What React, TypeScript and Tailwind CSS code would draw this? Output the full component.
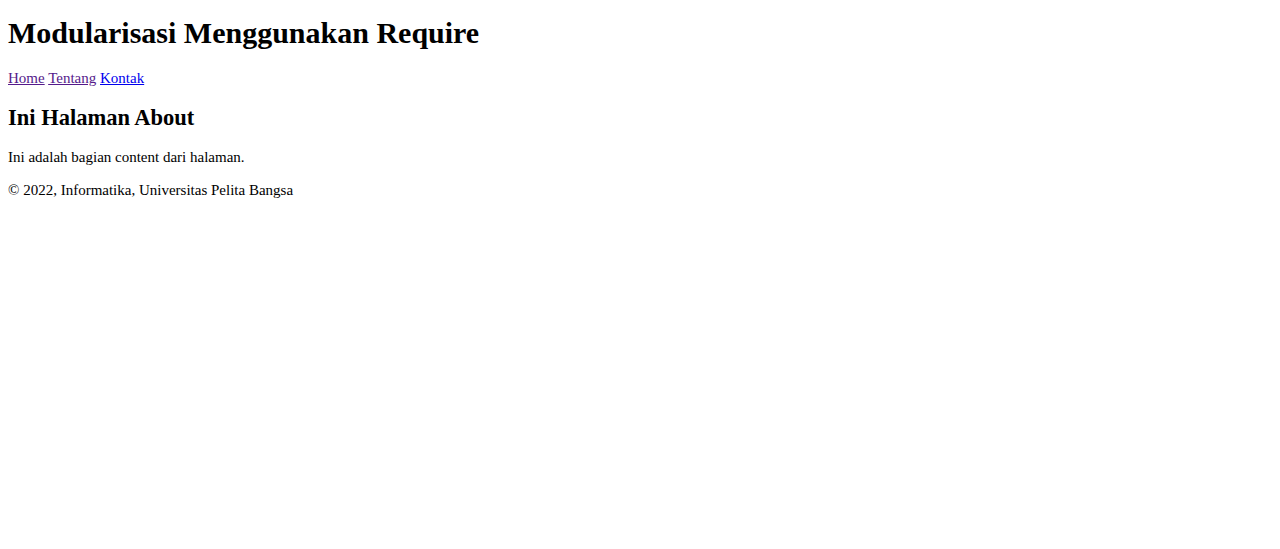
export default function App() {
  return (
    <div className="min-h-[549px] bg-white px-2 pt-[15px] text-black" style={{ fontFamily: '"Liberation Serif", "Times New Roman", serif' }}>
      <header>
        <h1 className="text-[30px] font-bold leading-[35px]">Modularisasi Menggunakan Require</h1>
        <nav className="mt-[20px] text-[15px] leading-[17px]">
          <a href="#home" className="text-[#551a8b] underline">Home</a>{" "}
          <a href="#tentang" className="text-[#551a8b] underline">Tentang</a>{" "}
          <a href="#kontak" className="text-[#0000ee] underline">Kontak</a>
        </nav>
      </header>
      <main>
        <h2 className="mt-[18px] text-[22.5px] font-bold leading-[26px]">Ini Halaman About</h2>
        <p className="mt-[18px] text-[15px] leading-[17px]">Ini adalah bagian content dari halaman.</p>
      </main>
      <footer className="mt-[16px] text-[15px] leading-[17px]">
        <p>© 2022, Informatika, Universitas Pelita Bangsa</p>
      </footer>
    </div>
  );
}
